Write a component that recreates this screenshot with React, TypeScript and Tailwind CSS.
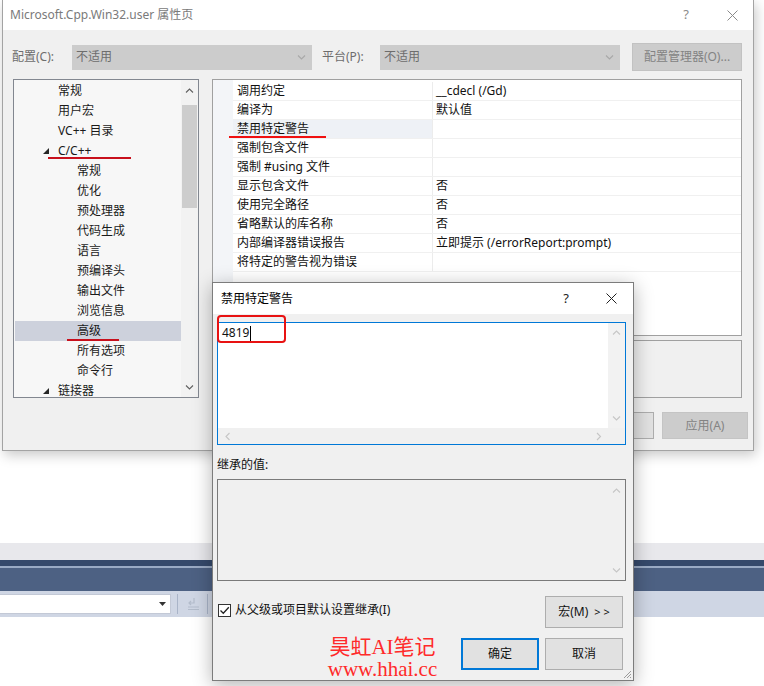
import React from "react";

const Chev = ({ dir, color = "#606060" }: { dir: "up" | "down" | "left" | "right"; color?: string }) => {
  const pts: Record<string, string> = {
    up: "1,5.5 4.5,2 8,5.5",
    down: "1,1.5 4.5,5 8,1.5",
    left: "5.5,1 2,4.5 5.5,8",
    right: "2,1 5.5,4.5 2,8",
  };
  const horiz = dir === "left" || dir === "right";
  return (
    <svg width={horiz ? 7 : 9} height={horiz ? 9 : 7} viewBox={horiz ? "0 0 7 9" : "0 0 9 7"}>
      <polyline points={pts[dir]} fill="none" stroke={color} strokeWidth="1.1" />
    </svg>
  );
};

const CloseX = ({ color }: { color: string }) => (
  <svg width="11" height="11" viewBox="0 0 11 11">
    <path d="M0.5 0.5 L10.5 10.5 M10.5 0.5 L0.5 10.5" stroke={color} strokeWidth="1" fill="none" />
  </svg>
);

const Expander = () => (
  <svg width="6" height="6" viewBox="0 0 6 6">
    <polygon points="6,0 6,6 0,6" fill="#262626" />
  </svg>
);

const tree: { t: string; l: number; exp?: boolean; sel?: boolean }[] = [
  { t: "常规", l: 1 },
  { t: "用户宏", l: 1 },
  { t: "VC++ 目录", l: 1 },
  { t: "C/C++", l: 1, exp: true },
  { t: "常规", l: 2 },
  { t: "优化", l: 2 },
  { t: "预处理器", l: 2 },
  { t: "代码生成", l: 2 },
  { t: "语言", l: 2 },
  { t: "预编译头", l: 2 },
  { t: "输出文件", l: 2 },
  { t: "浏览信息", l: 2 },
  { t: "高级", l: 2, sel: true },
  { t: "所有选项", l: 2 },
  { t: "命令行", l: 2 },
  { t: "链接器", l: 1, exp: true },
];

const props: [string, string][] = [
  ["调用约定", "__cdecl (/Gd)"],
  ["编译为", "默认值"],
  ["禁用特定警告", ""],
  ["强制包含文件", ""],
  ["强制 #using 文件", ""],
  ["显示包含文件", "否"],
  ["使用完全路径", "否"],
  ["省略默认的库名称", "否"],
  ["内部编译器错误报告", "立即提示 (/errorReport:prompt)"],
  ["将特定的警告视为错误", ""],
];

function MainWindow() {
  return (
    <div className="absolute left-[2px] top-0 w-[752px] h-[451px] flex flex-col bg-[#f0f0f0] border-x border-b border-[#a3a3a3] shadow-[2px_4px_12px_rgba(0,0,0,0.22)]">
      {/* title bar */}
      <div className="h-[30px] bg-white flex items-center pl-[7px] pr-[11px] text-[#7a7a7a]">
        <span className="text-[12px]">Microsoft.Cpp.Win32.user 属性页</span>
        <span className="ml-auto w-[20px] text-center text-[13px] text-[#8a8a8a]">?</span>
        <span className="ml-[26px] w-[20px] flex justify-center">
          <CloseX color="#8a8a8a" />
        </span>
      </div>
      {/* config row */}
      <div className="mt-[13px] h-[28px] flex items-center pl-[9px]">
        <span className="w-[60px] text-[#6d6d6d]">配置(C):</span>
        <div className="w-[240px] h-[25px] bg-[#cccccc] border border-[#cccccc] flex items-center pl-[3px] pr-[5px] text-[#6d6d6d]">
          <span>不适用</span>
          <span className="ml-auto">
            <Chev dir="down" color="#a8a8a8" />
          </span>
        </div>
        <span className="ml-[10px] w-[58px] text-[#6d6d6d]">平台(P):</span>
        <div className="w-[240px] h-[25px] bg-[#cccccc] border border-[#cccccc] flex items-center pl-[3px] pr-[5px] text-[#6d6d6d]">
          <span>不适用</span>
          <span className="ml-auto">
            <Chev dir="down" color="#a8a8a8" />
          </span>
        </div>
        <div className="ml-[12px] w-[110px] h-[28px] bg-[#cccccc] border border-[#c2c2c2] flex items-center justify-center text-[#838383]">
          配置管理器(O)...
        </div>
      </div>
      {/* panels */}
      <div className="mt-[8px] flex pl-[10px] gap-[13px]">
        {/* tree */}
        <div className="relative w-[186px] h-[319px] border border-[#828790] bg-[#f7f7f7] flex overflow-hidden">
          <div className="flex-1 pt-[1px] pl-[1px] flex flex-col">
            {tree.map((n, i) => (
              <div
                key={i}
                className={`h-[20px] shrink-0 flex items-center text-[#1a1a1a] ${n.sel ? "bg-[#cdd1dc]" : ""} ${
                  n.exp ? "pl-[28px]" : n.l === 1 ? "pl-[43px]" : "pl-[62px]"
                }`}
              >
                {n.exp && (
                  <span className="mr-[9px] flex">
                    <Expander />
                  </span>
                )}
                <span>{n.t}</span>
              </div>
            ))}
          </div>
          <div className="w-[17px] h-full bg-[#f2f2f2] flex flex-col items-center">
            <div className="h-[20px] flex items-center justify-center">
              <Chev dir="up" />
            </div>
            <div className="mt-[5px] w-[15px] h-[103px] bg-[#cdcdcd]" />
            <div className="flex-1" />
            <div className="h-[20px] flex items-center justify-center">
              <Chev dir="down" />
            </div>
          </div>
          <div className="absolute left-[34px] top-[77px] w-[83px] h-[2px] bg-[#c8101c]" />
          <div className="absolute left-[53px] top-[259px] w-[52px] h-[2px] bg-[#c8101c]" />
        </div>
        {/* right column */}
        <div className="w-[530px] flex flex-col gap-[4px]">
          <div className="relative h-[257px] border border-[#a0a0a0] bg-white flex">
            <div className="w-[20px] h-full bg-[#f3f5f8]" />
            <div className="flex-1 pt-[2px] flex flex-col">
              {props.map(([k, v], i) => (
                <div key={i} className="h-[19px] flex border-b border-[#f0f0f0] text-[#111]">
                  <div
                    className={`w-[200px] pl-[4px] border-r border-[#ececec] flex items-center ${
                      i === 2 ? "bg-[#eef1f6]" : ""
                    }`}
                  >
                    {k}
                  </div>
                  <div className="flex-1 pl-[3px] flex items-center">{v}</div>
                </div>
              ))}
            </div>
            <div className="absolute left-[16px] top-[56px] w-[97px] h-[2px] bg-[#f01010]" />
          </div>
          <div className="h-[58px] border border-[#a0a0a0] bg-[#f0f0f0]" />
        </div>
      </div>
      {/* bottom buttons */}
      <div className="mt-[14px] flex justify-end pr-[5px] gap-[8px]">
        <div className="w-[86px] h-[27px] border border-[#adadad] bg-[#e1e1e1] flex items-center justify-center">
          取消
        </div>
        <div className="w-[86px] h-[27px] border border-[#c4c4c4] bg-[#cccccc] flex items-center justify-center text-[#838383]">
          应用(A)
        </div>
      </div>
    </div>
  );
}

function Dialog() {
  return (
    <div className="absolute left-[212px] top-[282px] w-[422px] h-[399px] border border-[#7c7c7c] bg-[#f0f0f0] shadow-[0_4px_18px_rgba(0,0,0,0.3)] flex flex-col">
      <div className="h-[31px] shrink-0 bg-white flex items-center pl-[8px] pr-[12px] text-[#000]">
        <span>禁用特定警告</span>
        <span className="ml-auto w-[20px] text-center text-[13px] text-[#222]">?</span>
        <span className="ml-[25px] w-[20px] flex justify-center">
          <CloseX color="#222" />
        </span>
      </div>
      <div className="flex flex-col pl-[4px]">
        {/* edit */}
        <div className="mt-[8px] w-[409px] h-[123px] border border-[#0078d7] bg-white flex flex-col">
          <div className="flex-1 flex">
            <div className="flex-1 pl-[4px] flex items-start">
              <span className="leading-[20px] text-[#111]">4819</span>
              <span className="mt-[3px] ml-[1px] w-px h-[15px] bg-black" />
            </div>
            <div className="w-[17px] bg-[#f2f2f2] flex flex-col items-center justify-between py-[6px]">
              <Chev dir="up" color="#c6c6c6" />
              <Chev dir="down" color="#c6c6c6" />
            </div>
          </div>
          <div className="h-[16px] flex bg-[#f0f0f0]">
            <div className="flex-1 flex items-center justify-between px-[6px]">
              <Chev dir="left" color="#c6c6c6" />
              <Chev dir="right" color="#c6c6c6" />
            </div>
            <div className="w-[17px]" />
          </div>
        </div>
        <div className="mt-[12px] leading-[16px] text-[#111]">继承的值:</div>
        <div className="mt-[6px] w-[409px] h-[102px] border border-[#7a7a7a] bg-[#f0f0f0] flex justify-end">
          <div className="w-[17px] flex flex-col items-center justify-between pt-[7px] pb-[6px]">
            <Chev dir="up" color="#c6c6c6" />
            <Chev dir="down" color="#c6c6c6" />
          </div>
        </div>
        <div className="mt-[15px] h-[32px] flex items-start pr-[10px]">
          <div className="mt-[5px] ml-[1px] flex items-center">
            <span className="w-[13px] h-[13px] bg-white border border-[#333] flex items-center justify-center">
              <svg width="11" height="11" viewBox="0 0 11 11">
                <path d="M1.5 5.5 L4.3 8.3 L9.8 2.3" fill="none" stroke="#222" strokeWidth="1.3" />
              </svg>
            </span>
            <span className="ml-[4px] text-[#111]">从父级或项目默认设置继承(I)</span>
          </div>
          <div className="ml-auto w-[78px] h-[32px] border border-[#adadad] bg-[#e1e1e1] flex items-center justify-center text-[#111]">
            <span>宏(M)</span>
            <span className="ml-[6px] text-[11px]">&gt;</span>
            <span className="ml-[3px] text-[11px]">&gt;</span>
          </div>
        </div>
        <div className="mt-[10px] flex justify-end pr-[10px] gap-[6px]">
          <div className="w-[78px] h-[32px] border-2 border-[#0078d7] bg-[#e1e1e1] flex items-center justify-center text-[#111]">
            确定
          </div>
          <div className="w-[78px] h-[32px] border border-[#adadad] bg-[#e1e1e1] flex items-center justify-center text-[#111]">
            取消
          </div>
        </div>
      </div>
      {/* red annotation box */}
      <div className="absolute left-[4px] top-[32px] w-[69px] h-[28px] border-2 border-[#e81212] rounded-[4px]" />
      {/* resize grip */}
      <div className="absolute right-[1px] bottom-[1px]">
        <svg width="10" height="10" viewBox="0 0 10 10">
          <path d="M9 2 L2 9 M9 5 L5 9 M9 8 L8 9" stroke="#9a9a9a" strokeWidth="1" />
        </svg>
      </div>
    </div>
  );
}

export default function App() {
  return (
    <div className="relative w-[764px] h-[686px] overflow-hidden bg-white text-[12px] font-['Noto_Sans','Noto_Sans_CJK_SC',sans-serif]">
      {/* background IDE toolbar */}
      <div className="pt-[543px] flex flex-col">
        <div className="h-[17px] bg-[#e8e8ec]" />
        <div className="h-[6px] bg-[#35496b]" />
        <div className="h-[2px] bg-[#9aaac4]" />
        <div className="h-[23px] bg-[#4d6183]" />
        <div className="h-[26px] bg-[#cfd6e4] flex items-center">
          <div className="w-[171px] h-[20px] bg-white border border-l-0 border-[#c3c9d6] flex items-center justify-end pr-[4px]">
            <svg width="7" height="4" viewBox="0 0 7 4">
              <polygon points="0,0 7,0 3.5,4" fill="#333" />
            </svg>
          </div>
          <div className="ml-[6px] w-px h-[20px] bg-[#a9b4c8]" />
          <div className="ml-[7px] flex">
            <svg width="16" height="16" viewBox="0 0 16 16">
              <path d="M9 2 L9 7 L4 7 M6 5 L4 7 L6 9" fill="none" stroke="#b3bccb" strokeWidth="1.2" />
              <path d="M3 11 H14 M3 13.5 H14" stroke="#b3bccb" strokeWidth="1.2" />
            </svg>
          </div>
          <div className="ml-[6px] w-px h-[20px] bg-[#a9b4c8]" />
        </div>
      </div>
      <MainWindow />
      <Dialog />
      {/* watermark */}
      <div className="absolute left-[327px] top-[636px] w-[111px] flex flex-col items-center text-[#ff2a2a] font-['Liberation_Serif','Noto_Sans_CJK_SC',serif]">
        <span className="text-[21px] leading-[22px] whitespace-nowrap">昊虹AI笔记</span>
        <span className="text-[21px] leading-[22px] whitespace-nowrap">www.hhai.cc</span>
      </div>
    </div>
  );
}
